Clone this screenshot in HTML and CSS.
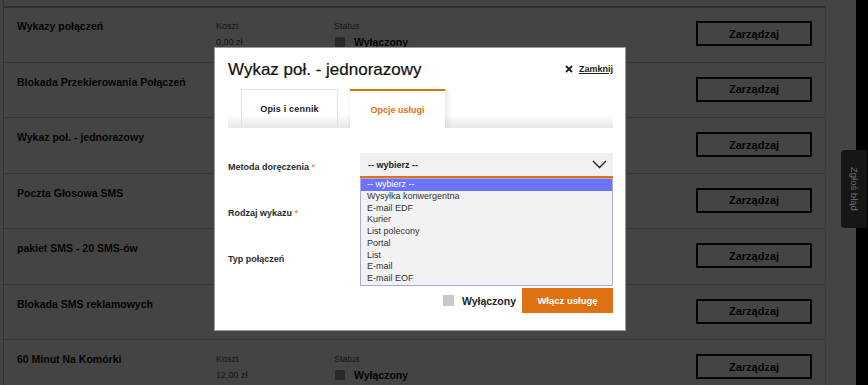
FILE: index.html
```html
<!DOCTYPE html>
<html lang="pl">
<head>
<meta charset="utf-8">
<title>Usługi</title>
<link rel="stylesheet" href="styles.css">
</head>
<body>
<div class="page">
  <main class="list">
    <div class="row first">
      <div class="title">Wykazy połączeń</div>
      <div class="cost"><div>Koszt</div><div>0,00 zł</div></div>
      <div class="status"><div>Status</div><div class="state"><span class="box"></span>Wyłączony</div></div>
      <button class="manage">Zarządzaj</button>
    </div>
    <div class="row">
      <div class="title">Blokada Przekierowania Połączeń</div>
      <div></div><div></div>
      <button class="manage">Zarządzaj</button>
    </div>
    <div class="row">
      <div class="title">Wykaz poł. - jednorazowy</div>
      <div></div><div></div>
      <button class="manage">Zarządzaj</button>
    </div>
    <div class="row">
      <div class="title">Poczta Głosowa SMS</div>
      <div></div><div></div>
      <button class="manage">Zarządzaj</button>
    </div>
    <div class="row">
      <div class="title">pakiet SMS - 20 SMS-ów</div>
      <div></div><div></div>
      <button class="manage">Zarządzaj</button>
    </div>
    <div class="row">
      <div class="title">Blokada SMS reklamowych</div>
      <div></div><div></div>
      <button class="manage">Zarządzaj</button>
    </div>
    <div class="row">
      <div class="title">60 Minut Na Komórki</div>
      <div class="cost"><div>Koszt</div><div>12,00 zł</div></div>
      <div class="status"><div>Status</div><div class="state"><span class="box"></span>Wyłączony</div></div>
      <button class="manage">Zarządzaj</button>
    </div>
  </main>
  <div class="gutter"></div>
  <div class="scrollbar"></div>
</div>

<div class="overlay"></div>

<div class="modal">
  <div class="modal-head">
    <h2 class="modal-title">Wykaz poł. - jednorazowy</h2>
    <a class="close" href="#"><svg width="8" height="8" viewBox="0 0 8 8"><path d="M1 1 L7 7 M7 1 L1 7" stroke="#222" stroke-width="1.8" fill="none"/></svg><span>Zamknij</span></a>
  </div>
  <div class="tabs">
    <div class="tab tab-desc">Opis i cennik</div>
    <div class="tab tab-opts">Opcje usługi</div>
  </div>
  <div class="form">
    <div class="field">
      <div class="label">Metoda doręczenia <span class="req">*</span></div>
      <div class="select">
        <span>-- wybierz --</span>
        <svg width="15" height="9" viewBox="0 0 15 9"><path d="M1 1 L7.5 7.5 L14 1" stroke="#222" stroke-width="1.4" fill="none"/></svg>
        <ul class="options">
          <li class="on">-- wybierz --</li>
          <li>Wysyłka konwergentna</li>
          <li>E-mail EDF</li>
          <li>Kurier</li>
          <li>List polecony</li>
          <li>Portal</li>
          <li>List</li>
          <li>E-mail</li>
          <li>E-mail EOF</li>
        </ul>
      </div>
    </div>
    <div class="field">
      <div class="label">Rodzaj wykazu <span class="req">*</span></div>
      <div class="select"></div>
    </div>
    <div class="field">
      <div class="label">Typ połączeń</div>
      <div class="select"></div>
    </div>
  </div>
  <div class="foot">
    <span class="mbox"></span>
    <span class="mstate">Wyłączony</span>
    <button class="enable">Włącz usługę</button>
  </div>
</div>

<a class="feedback" href="#">Zgłoś błąd</a>
</body>
</html>
```
FILE: styles.css
```css
html, body {
  margin: 0;
  height: 385px;
  overflow: hidden;
}
body {
  width: 868px;
  background: #fff;
  font-family: "Liberation Sans", Arial, sans-serif;
}
.page {
  display: flex;
  height: 385px;
}
.list {
  box-sizing: border-box;
  margin-left: 3px;
  width: 823px;
  border-left: 1px solid #c8c8c8;
  border-right: 1px solid #dcdcdc;
  padding-top: 6px;
}
.gutter { width: 30px; }
.scrollbar { width: 12px; background: #000; }

.row {
  box-sizing: border-box;
  height: 55.5px;
  border-top: 1px solid #c8c8c8;
  padding: 13px 13px 0 13px;
  display: grid;
  grid-template-columns: 199px 118px 1fr 116px;
  align-items: start;
}
.row.first {
  border-top: 2px solid #b4b4b4;
  padding-top: 12px;
}
.title {
  font-size: 10.5px;
  line-height: 12px;
  font-weight: bold;
  color: #111;
}
.cost, .status {
  margin-top: -2px;
  font-size: 9px;
  line-height: 16px;
  color: #555;
}
.state {
  display: flex;
  align-items: center;
  gap: 9px;
  margin-left: 1px;
  font-size: 10.5px;
  font-weight: bold;
  color: #111;
}
.box {
  width: 10px;
  height: 10px;
  background: #9a9a9a;
}
.manage {
  margin-top: 1px;
  height: 25px;
  box-sizing: border-box;
  border: 2px solid #111;
  background: #fff;
  font-family: "Liberation Sans", Arial, sans-serif;
  font-size: 11px;
  font-weight: bold;
  color: #111;
  padding: 0;
}

.overlay {
  position: fixed;
  inset: 0;
  background: rgba(0, 0, 0, 0.735);
  z-index: 10;
}

.modal {
  position: fixed;
  left: 214px;
  top: 47px;
  width: 412px;
  box-sizing: border-box;
  border: 1px solid #9a9a9a;
  background: #fff;
  padding: 12px 12px 17px 13px;
  z-index: 20;
}
.modal-head {
  display: flex;
  justify-content: space-between;
  align-items: center;
  height: 20px;
}
.modal-title {
  margin: 0;
  font-size: 17px;
  line-height: 20px;
  font-weight: normal;
  color: #111;
  -webkit-text-stroke: 0.2px #111;
}
.close {
  display: flex;
  align-items: center;
  gap: 6px;
  margin-top: -2px;
  font-size: 9px;
  font-weight: bold;
  color: #222;
  text-decoration: none;
}
.close span { text-decoration: underline; }

.tabs {
  margin-top: 9px;
  height: 39px;
  display: flex;
  gap: 12px;
  padding-left: 13px;
  overflow: hidden;
  background: linear-gradient(to bottom, #fff 0%, #fff 65%, #e6e6e6 100%);
}
.tab {
  box-sizing: border-box;
  display: flex;
  align-items: center;
  justify-content: center;
  font-size: 9px;
  font-weight: bold;
}
.tab-desc {
  width: 97px;
  border: 1px solid #e2e2e2;
  border-bottom: 0;
  color: #222;
  letter-spacing: 0.2px;
}
.tab-opts {
  width: 95px;
  border-top: 2px solid #e07113;
  background: #fff;
  color: #e07113;
  box-shadow: 3px 0 5px rgba(0, 0, 0, 0.08), -1px 0 3px rgba(0, 0, 0, 0.05);
}

.form {
  padding-top: 25px;
  display: flex;
  flex-direction: column;
  gap: 21px;
}
.field {
  display: grid;
  grid-template-columns: 132px 1fr;
  align-items: center;
  height: 25px;
}
.label {
  padding-top: 2px;
  font-size: 9px;
  font-weight: bold;
  color: #2a2a2a;
}
.req { color: #eb9a4e; }
.select {
  position: relative;
  box-sizing: border-box;
  height: 25px;
  display: flex;
  align-items: center;
  justify-content: space-between;
  padding: 0 6px 0 8px;
  background: #f0f0f0;
  border-bottom: 2px solid #e07113;
  font-size: 9px;
  font-weight: bold;
  color: #222;
}
.options {
  position: absolute;
  left: 0;
  right: 0;
  top: 25px;
  margin: 0;
  padding: 0;
  list-style: none;
  border: 1px solid #aaaade;
  background: #f2f2f2;
  z-index: 2;
}
.options li {
  height: 11.75px;
  line-height: 11.75px;
  padding-left: 6px;
  font-size: 9px;
  font-weight: normal;
  color: #333;
}
.options li.on {
  background: #6b73ff;
  color: #fff;
}

.foot {
  margin-top: 18px;
  height: 25px;
  display: flex;
  justify-content: flex-end;
  align-items: center;
}
.mbox {
  width: 11px;
  height: 11px;
  background: #c8c8c8;
  margin-right: 8px;
}
.mstate {
  margin-right: 6px;
  font-size: 10.5px;
  font-weight: bold;
  color: #222;
}
.enable {
  width: 91px;
  height: 25px;
  border: 0;
  padding: 0;
  background: #e07113;
  color: #fff;
  font-family: "Liberation Sans", Arial, sans-serif;
  font-size: 9.5px;
  font-weight: bold;
}

.feedback {
  position: fixed;
  right: 1px;
  top: 150px;
  width: 26px;
  height: 78px;
  box-sizing: border-box;
  border-radius: 4px 0 0 4px;
  background: #161616;
  color: #6d6d6d;
  font-size: 9.5px;
  writing-mode: vertical-rl;
  display: flex;
  align-items: center;
  justify-content: center;
  text-decoration: none;
  z-index: 30;
}
```
